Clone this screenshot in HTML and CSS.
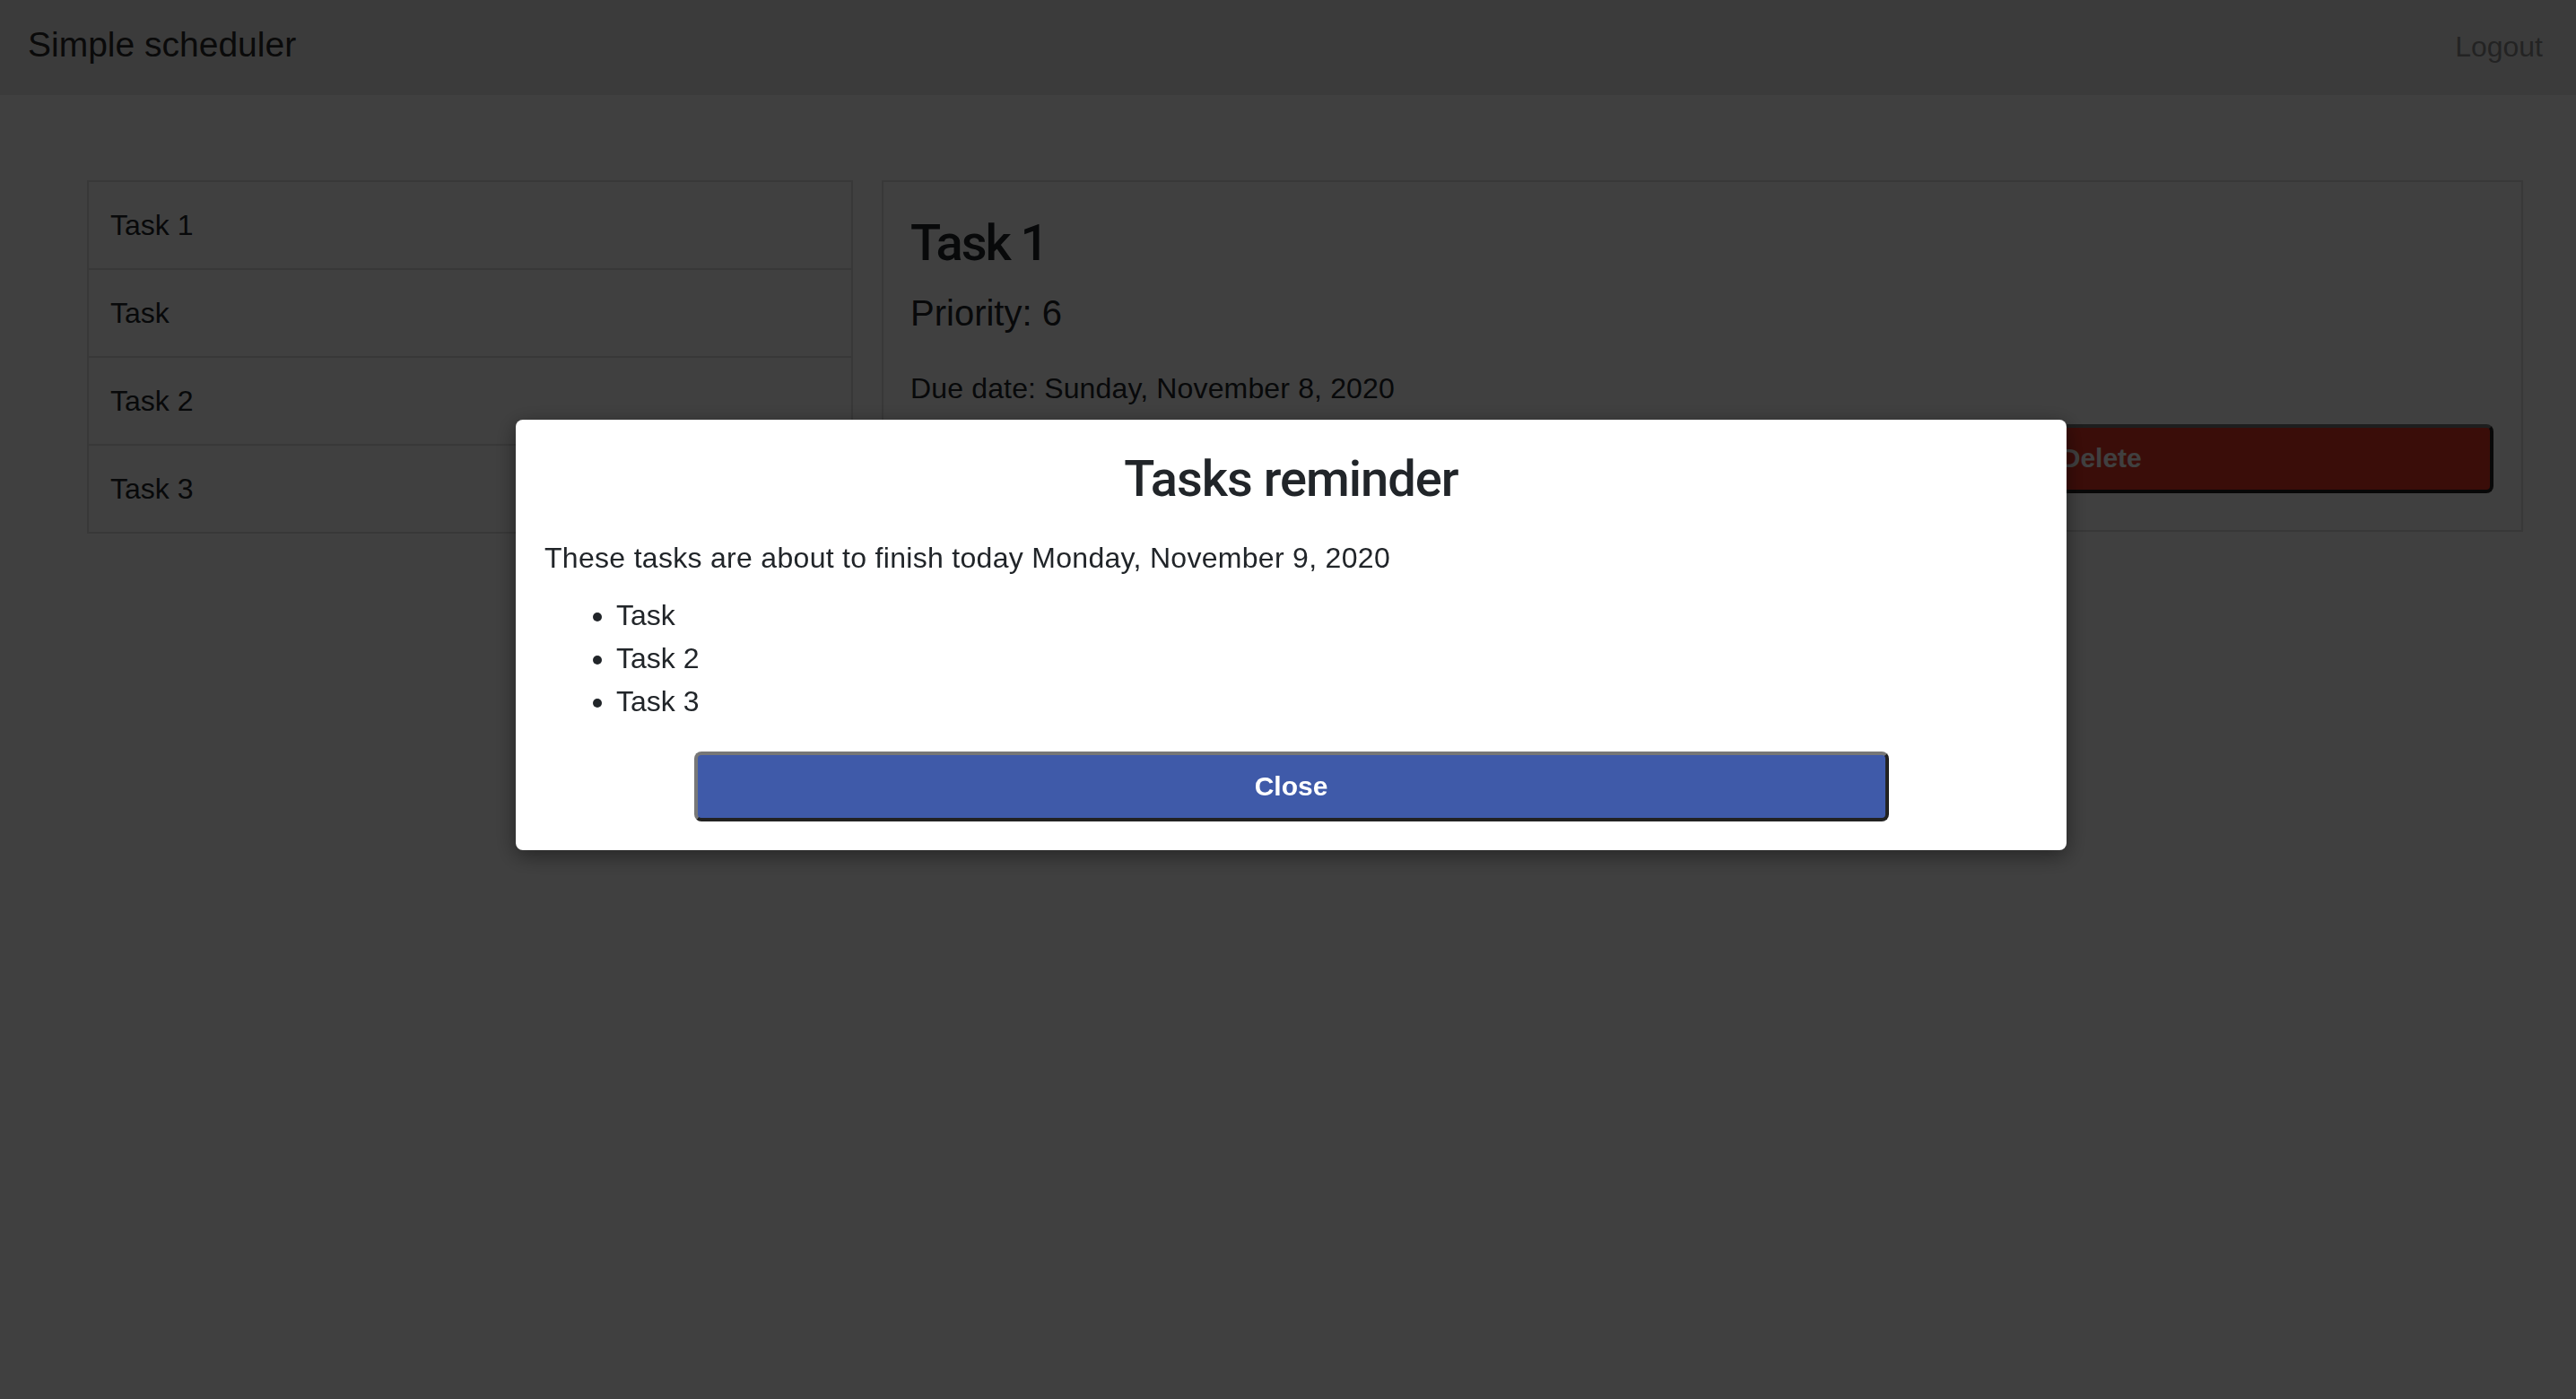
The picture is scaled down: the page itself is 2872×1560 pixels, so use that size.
FILE: index.html
```html
<!DOCTYPE html>
<html lang="en">
<head>
<meta charset="utf-8">
<title>Simple scheduler</title>
<link rel="stylesheet" href="styles.css">
</head>
<body>
<nav class="navbar">
  <span class="brand">Simple scheduler</span>
  <a class="logout" href="#">Logout</a>
</nav>
<main class="content">
  <ul class="task-list">
    <li class="task-item">Task 1</li>
    <li class="task-item">Task</li>
    <li class="task-item">Task 2</li>
    <li class="task-item">Task 3</li>
  </ul>
  <section class="card">
    <h3 class="card-title">Task 1</h3>
    <h5 class="card-priority">Priority: 6</h5>
    <p class="card-date">Due date: Sunday, November 8, 2020</p>
    <div class="actions">
      <button class="btn btn-delete">Delete</button>
    </div>
  </section>
</main>
<div class="backdrop">
  <div class="modal">
    <h2 class="modal-title">Tasks reminder</h2>
    <p class="modal-text">These tasks are about to finish today Monday, November 9, 2020</p>
    <ul class="modal-list">
      <li>Task</li>
      <li>Task 2</li>
      <li>Task 3</li>
    </ul>
    <button class="btn btn-close">Close</button>
  </div>
</div>
</body>
</html>
```
FILE: styles.css
```css
* { box-sizing: border-box; }

html, body {
  margin: 0;
  padding: 0;
  background: #ffffff;
  color: #212529;
  font-family: "Liberation Sans", Arial, sans-serif;
  font-size: 32px;
  line-height: 48px;
}

.navbar {
  height: 106px;
  background: #ececec;
  display: flex;
  justify-content: space-between;
  align-items: baseline;
  padding: 21px 37px 0 31px;
}

.brand {
  font-size: 39px;
  line-height: 58px;
  color: #282828;
}

.logout {
  font-size: 32px;
  line-height: 48px;
  color: #8c8c8c;
  text-decoration: none;
}

.content {
  display: grid;
  grid-template-columns: 854px 1fr;
  gap: 32px;
  align-items: start;
  padding: 95px 59px 0 97px;
}

.task-list {
  list-style: none;
  margin: 0;
  padding: 0;
  border: 2px solid #dfdfdf;
}

.task-item {
  padding: 24px 24px;
  line-height: 48px;
}

.task-item + .task-item {
  border-top: 2px solid #dfdfdf;
}

.card {
  border: 2px solid #dfdfdf;
  padding: 35px 31px 41px 30px;
}

.card-title {
  margin: 0 0 20px;
  font-family: Roboto, "Liberation Sans", sans-serif;
  font-weight: 500;
  font-size: 56px;
  line-height: 1.2;
  letter-spacing: -2px;
}

.card-priority {
  margin: 0 0 36px;
  font-weight: 400;
  font-size: 40px;
  line-height: 48px;
}

.card-date {
  margin: 0 0 16px;
  letter-spacing: 0.15px;
}

.actions {
  display: grid;
  grid-template-columns: 1fr 1fr;
  gap: 16px;
}

.btn {
  font-family: "Liberation Sans", Arial, sans-serif;
  font-weight: 700;
  font-size: 30px;
  line-height: 48px;
  color: #ffffff;
  border-width: 4px;
  border-style: solid;
  border-color: #777777 #222222 #222222 #777777;
  border-radius: 8px;
  padding: 10px 16px 11px;
  text-align: center;
}

.btn-delete {
  grid-column: 2;
  background: #e83424;
}

.backdrop {
  position: fixed;
  inset: 0;
  background: rgba(0, 0, 0, 0.75);
  display: flex;
  justify-content: center;
  align-items: flex-start;
  padding: 468px 0 0 7px;
}

.modal {
  width: 1729px;
  background: #ffffff;
  border-radius: 8px;
  padding: 33px 32px 32px;
  box-shadow: 0 6px 24px rgba(0, 0, 0, 0.45);
}

.modal-title {
  margin: 0 0 30px;
  text-align: center;
  font-family: Roboto, "Liberation Sans", sans-serif;
  font-weight: 500;
  font-size: 56px;
  line-height: 1.2;
  letter-spacing: -1px;
}

.modal-text {
  margin: 0 0 16px;
  letter-spacing: 0.3px;
}

.modal-list {
  margin: 0 0 32px;
  padding-left: 80px;
}

.btn-close {
  display: block;
  width: 80%;
  margin: 0 auto;
  height: 78px;
  background: #3f5aa9;
}
```
